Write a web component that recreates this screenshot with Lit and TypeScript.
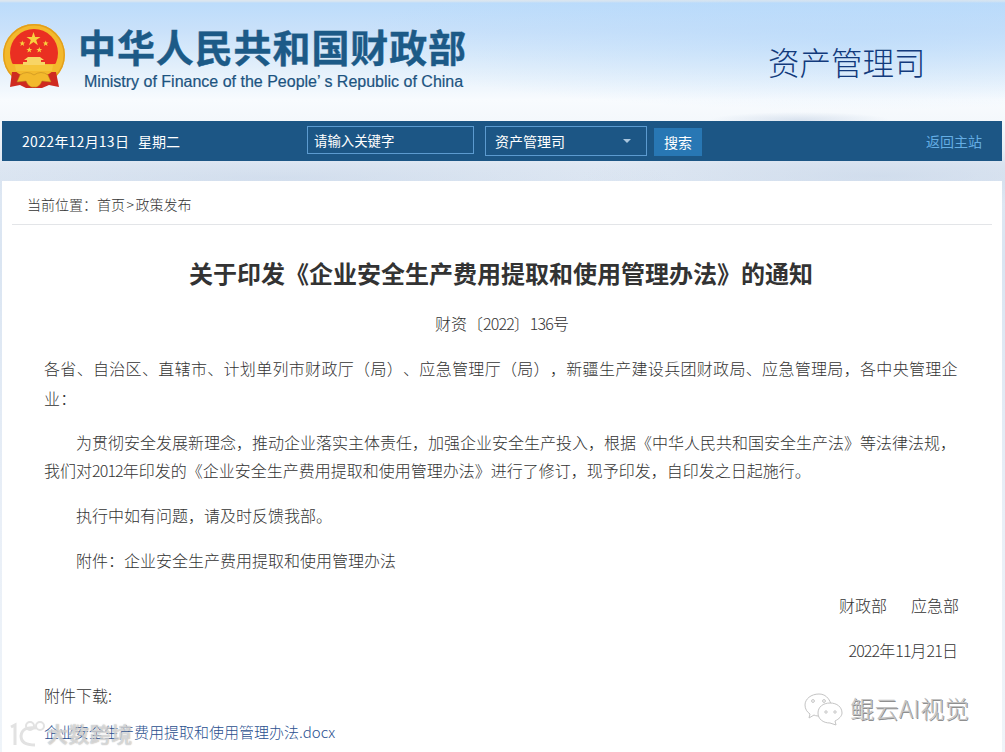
import { LitElement, html, css } from "lit";
import { customElement } from "lit/decorators.js";

@customElement("app-root")
export class AppRoot extends LitElement {
  static styles = css`
    :host {
      display: block;
      position: relative;
      width: 1005px;
      height: 752px;
      overflow: hidden;
      font-family: "Noto Sans CJK SC", "Liberation Sans", sans-serif;
      text-spacing-trim: space-all;
      font-kerning: none;
      color: #333;
      background:
        radial-gradient(ellipse 90px 8px at 800px 120px, rgba(190,205,225,.5), transparent),
        radial-gradient(ellipse 300px 30px at 880px 176px, rgba(195,210,230,.5), transparent),
        radial-gradient(ellipse 400px 24px at 280px 178px, rgba(195,210,230,.45), transparent),
        radial-gradient(ellipse 500px 70px at 850px 40px, rgba(175,213,250,.45), transparent),
        linear-gradient(180deg, #dce6ef 0, #dce6ef 1px, #bcdcfb 3px, #c9e1fa 30px, #e4f0fb 70px, #f8fbfe 100px, #f4f8fc 120px, #dfe8f3 165px, #dae5f2 260px, #e9eff7 520px, #eff4f9 752px);
    }
    .head {
      height: 121px;
      display: flex;
      box-sizing: border-box;
      padding: 24px 0 0 3px;
    }
    .emblem { width: 62px; height: 66px; flex: none; }
    .brand { margin-left: 13px; width: 430px; }
    .cn {
      font-size: 38px;
      line-height: 48px;
      font-weight: 700;
      letter-spacing: 0.9px;
      color: #1c5a87;
      white-space: nowrap;
      margin-top: -2px;
      -webkit-text-stroke: 0.4px #1c5a87;
    }
    .en {
      margin-left: 6px;
      margin-top: 2px;
      font: 16px/20px "Liberation Sans", sans-serif;
      color: #1c5380;
      white-space: nowrap;
      -webkit-text-stroke: 0.2px #1c5380;
    }
    .dept {
      margin-left: 260px;
      padding-top: 14px;
      font-size: 31.5px;
      line-height: 46px;
      font-weight: 300;
      color: #123a7c;
      white-space: nowrap;
    }
    .bar {
      margin: 0 3px 0 2px;
      height: 40px;
      background: #1c5685;
      display: flex;
      align-items: center;
      color: #fff;
      font-size: 14px;
    }
    .date { width: 305px; padding-left: 20px; box-sizing: border-box; white-space: pre; }
    .bnum { letter-spacing: 0.35px; }
    .wk { margin-left: 9px; }
    .kw {
      width: 167px; height: 28px; box-sizing: border-box;
      border: 1px solid #5c9bd0;
      line-height: 26px; padding-left: 6px;
      margin-top: -2px;
      font-size: 13.4px;
    }
    .sel {
      width: 162px; height: 30px; box-sizing: border-box;
      border: 1px solid #5c9bd0;
      margin-left: 11px;
      padding: 0 15px 0 9px;
      display: flex; align-items: center; justify-content: space-between;
    }
    .caret { width: 0; height: 0; border: 4px solid transparent; border-top: 4px solid #a9c6de; border-bottom: 0; }
    .btn {
      width: 48px; height: 28px; margin-left: 7px; margin-top: 2px;
      background: #2877b4;
      text-align: center; line-height: 28px;
    }
    .back { margin-left: auto; margin-right: 20px; color: #64ade4; }
    .card {
      margin: 20px 3px 0 2px;
      height: 571px;
      background: #fff;
      padding: 0 10px;
      box-sizing: border-box;
    }
    .crumb {
      height: 43px;
      border-bottom: 1px solid #e3e5e8;
      padding-left: 15px;
      font-size: 14px;
      line-height: 47px;
      font-weight: 300;
      color: #333;
    }
    .gt { margin: 0 1.5px; }
    .title {
      margin-top: 28px;
      padding-right: 2px;
      text-align: center;
      font-size: 24px;
      line-height: 40px;
      font-weight: 700;
      color: #333;
    }
    .no {
      margin-top: 19px;
      text-align: center;
      font-size: 16px;
      line-height: 22px;
      font-weight: 300;
    }
    .num { letter-spacing: -0.88px; }
    .body {
      margin: 19px 32px 0 32px;
      font-size: 16px;
      line-height: 30px;
      font-weight: 300;
    }
    .body p { margin: 0 0 15px; }
    .body .lead { letter-spacing: 0.32px; }
    .body .in { text-indent: 32px; }
    .body .two { line-height: 28px; margin-bottom: 16px; }
    .body .sign { display: flex; justify-content: flex-end; gap: 24px; padding-right: 1px; }
    .body .r { text-align: right; padding-right: 2px; }
    .body .dl { margin: 0 0 7px; }
    .body .link { color: #2a4f8f; margin: 0; font-size: 15px; }
    .wm1 {
      position: absolute; left: 8px; top: 719px;
      display: flex; align-items: center;
      color: rgba(255,255,255,.55);
      font-size: 21px; line-height: 28px; font-weight: 700;
      pointer-events: none;
    }
    .wm1 svg { width: 40px; height: 28px; }
    .wm1 span { margin-left: -1px; letter-spacing: .4px; text-shadow: 0 0 1px rgba(120,120,120,.7); }
    .wm2 {
      position: absolute; left: 804px; top: 689px;
      display: flex; align-items: center;
      color: #c2c2c2;
      font-size: 24px; line-height: 30px; font-weight: 300;
      letter-spacing: .4px;
      text-shadow: 1px 1px 0 #8f8f8f;
      white-space: nowrap;
      pointer-events: none;
    }
    .wm2 svg { width: 42px; height: 34px; margin: 3px 4px 0 0; }
  `;

  render() {
    return html`
      <div class="head">
        <svg class="emblem" viewBox="0 -1 62 66">
          <ellipse cx="31" cy="30" rx="31" ry="31" fill="#f3b92c"/>
          <circle cx="31" cy="30" r="30.2" fill="none" stroke="#e39f1c" stroke-width="1.4"/>
          <circle cx="31" cy="28" r="24" fill="#ea2f22"/>
          <path d="M9 47 L7 62 L17 60 L23 63 L39 63 L46 60 L56 62 L53 47 Z" fill="#cf2a20"/>
          <path d="M9 39 H53 L50 46 Q42 53 31 53 Q20 53 12 46 Z" fill="#f3b92c"/>
          <path d="M12 40 H50 L49 46 H13 Z" fill="#f6c53a"/>
          <path d="M25 32 H37 L41 35 H38 V37 H42 V40 H20 V37 H24 V35 H21 Z" fill="#f8d565"/>
          <path d="M17 50 Q24 45 31 50 Q38 45 45 50 L48 57 L39 56 Q36 63 31 62 Q26 63 23 56 L14 57 Z" fill="#f3b92c" stroke="#b8821c" stroke-width=".5"/>
          <path d="M30.5 7 l1.7 5 5.3 0 -4.3 3.1 1.7 5.1 -4.4-3.1 -4.4 3.1 1.7-5.1 -4.3-3.1 5.3 0z" fill="#f8d23f"/>
          <path d="M19.3 15.5 l.8 2 2.2 0 -1.8 1.3 .7 2.2 -1.9-1.3 -1.9 1.3 .7-2.2 -1.8-1.3 2.2 0z" fill="#f8d23f"/>
          <path d="M42.7 15.5 l.8 2 2.2 0 -1.8 1.3 .7 2.2 -1.9-1.3 -1.9 1.3 .7-2.2 -1.8-1.3 2.2 0z" fill="#f8d23f"/>
          <path d="M26.3 22 l.8 2 2.2 0 -1.8 1.3 .7 2.2 -1.9-1.3 -1.9 1.3 .7-2.2 -1.8-1.3 2.2 0z" fill="#f8d23f"/>
          <path d="M36.3 22 l.8 2 2.2 0 -1.8 1.3 .7 2.2 -1.9-1.3 -1.9 1.3 .7-2.2 -1.8-1.3 2.2 0z" fill="#f8d23f"/>
        </svg>
        <div class="brand">
          <div class="cn">中华人民共和国财政部</div>
          <div class="en">Ministry of Finance of the People’ s Republic of China</div>
        </div>
        <div class="dept">资产管理司</div>
      </div>
      <div class="bar">
        <div class="date"><span class="bnum">2022</span>年<span class="bnum">12</span>月<span class="bnum">13</span>日<span class="wk">星期二</span></div>
        <div class="kw">请输入关键字</div>
        <div class="sel"><span>资产管理司</span><i class="caret"></i></div>
        <div class="btn">搜索</div>
        <div class="back">返回主站</div>
      </div>
      <div class="card">
        <div class="crumb">当前位置：首页<span class="gt">&gt;</span>政策发布</div>
        <div class="title">关于印发《企业安全生产费用提取和使用管理办法》的通知</div>
        <div class="no">财资〔<span class="num">2022</span>〕<span class="num">136</span>号</div>
        <div class="body">
          <p class="lead">各省、自治区、直辖市、计划单列市财政厅（局）、应急管理厅（局），新疆生产建设兵团财政局、应急管理局，各中央管理企业：</p>
          <p class="in two">为贯彻安全发展新理念，推动企业落实主体责任，加强企业安全生产投入，根据《中华人民共和国安全生产法》等法律法规，我们对<span class="num">2012</span>年印发的《企业安全生产费用提取和使用管理办法》进行了修订，现予印发，自印发之日起施行。</p>
          <p class="in">执行中如有问题，请及时反馈我部。</p>
          <p class="in">附件：企业安全生产费用提取和使用管理办法</p>
          <p class="sign"><span>财政部</span><span>应急部</span></p>
          <p class="r"><span class="num">2022</span>年<span class="num">11</span>月<span class="num">21</span>日</p>
          <p class="dl">附件下载:</p>
          <p class="link">企业安全生产费用提取和使用管理办法.docx</p>
        </div>
      </div>
      <div class="wm1">
        <svg viewBox="0 0 40 28" fill="none" stroke="#e2e2e2" stroke-width="3">
          <path d="M3 8 L7 6 V26"/><path d="M28 9 Q14 7 13 17 Q13 26 27 26"/>
          <circle cx="22" cy="7" r="4" stroke-width="2"/><circle cx="32" cy="7" r="4" stroke-width="2"/>
        </svg>
        <span>大数跨境</span>
      </div>
      <div class="wm2">
        <svg viewBox="0 0 42 34" fill="#fff" stroke="#c4c4c4" stroke-width="1">
          <path d="M15 2 C7 2 1 7 1 13 C1 17 3 20 6 22 L5 26 L10 23 C12 24 14 24 16 24 C26 24 30 18 27 12 C25 6 21 2 15 2 Z"/>
          <path d="M26 11 C19 11 14 15 14 21 C14 27 19 31 26 31 L32 33 L31 29 C35 27 38 24 38 21 C38 15 33 11 26 11 Z"/>
          <circle cx="9" cy="9" r="1.4"/><circle cx="20" cy="9" r="1.4"/>
          <circle cx="22" cy="20" r="1.2"/><circle cx="31" cy="20" r="1.2"/>
        </svg>
        <span>鲲云AI视觉</span>
      </div>
    `;
  }
}
